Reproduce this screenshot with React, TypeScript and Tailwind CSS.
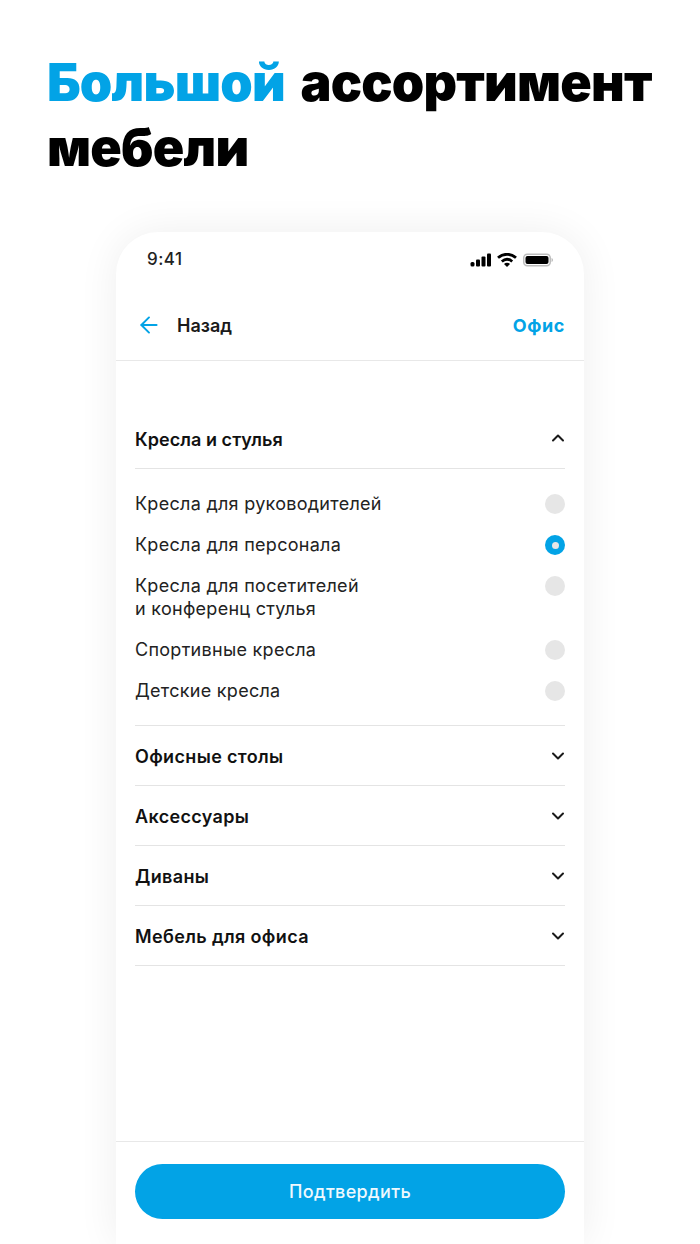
import { ArrowLeft, ChevronDown, ChevronUp } from 'lucide-react'

const font = { fontFamily: 'Inter, "Noto Sans", sans-serif' }

const options = [
  { label: ['Кресла для руководителей'], active: false },
  { label: ['Кресла для персонала'], active: true },
  { label: ['Кресла для посетителей', 'и конференц стулья'], active: false },
  { label: ['Спортивные кресла'], active: false },
  { label: ['Детские кресла'], active: false },
]

const sections = ['Офисные столы', 'Аксессуары', 'Диваны', 'Мебель для офиса']

const StatusIcons = () => (
  <div className="flex items-center">
    <svg width="22" height="14" viewBox="0 0 22 14" className="fill-black">
      <rect x="0.5" y="9" width="4" height="4.500" rx="1.500" />
      <rect x="6" y="6.500" width="4" height="7" rx="1" />
      <rect x="11.500" y="3.500" width="4" height="10" rx="1" />
      <rect x="17" y="0.5" width="4" height="13" rx="1" />
    </svg>
    <svg width="20" height="14" viewBox="0 0 20 14" fill="none" className="ml-[5px] stroke-black">
      <path d="M1 4.800C6.200 .1 13.800 .1 19 4.800" strokeWidth="2.800" />
      <path d="M4.800 8.500C8 5.700 12 5.700 15.200 8.500" strokeWidth="2.800" />
      <path d="M10 14 7 10.900c1.700-1.400 4.300-1.400 6 0z" fill="black" stroke="none" />
    </svg>
    <svg width="30" height="14" viewBox="0 0 30 14" className="ml-[6px]">
      <rect x="0.75" y="1.250" width="26.500" height="11.500" rx="3.500" fill="none" stroke="#bdbdbd" strokeWidth="1.500" />
      <rect x="2.500" y="3" width="23" height="8" rx="2" fill="black" />
      <path d="M28.500 5v4c.9-.3 1.500-1.100 1.500-2s-.6-1.700-1.500-2z" fill="#bdbdbd" />
    </svg>
  </div>
)

export default function App() {
  return (
    <div className="h-[1244px] overflow-hidden bg-white" style={font}>
      <h1 className="pl-[47px] pt-[50px] pb-[2px] text-[52px] leading-[65px] font-black tracking-[-0.8px] [word-spacing:6px] text-black whitespace-nowrap">
        <span className="text-[#02a3e6]">Большой</span> ассортимент
        <br />
        мебели
      </h1>

      <div className="mx-auto mt-[50px] flex h-[1012px] w-[468px] flex-col rounded-t-[42px] bg-white shadow-[0_0_40px_rgba(0,0,0,0.07)]">
        {/* Status bar */}
        <div className="flex h-[58px] items-center justify-between pb-[2px] pl-[31px] pr-[31px] text-black">
          <span className="text-[17px] font-medium tracking-[0.5px] text-[#222]">9:41</span>
          <StatusIcons />
        </div>

        {/* Nav */}
        <div className="flex h-[71px] items-center justify-between border-b border-[#e8e8e8] pl-[20px] pr-[19px]">
          <div className="flex items-center gap-[15px]">
            <ArrowLeft className="h-[26px] w-[26px] text-[#02a3e6]" strokeWidth={1.8} />
            <span className="text-[18px] font-semibold text-[#1a1a1a]">Назад</span>
          </div>
          <span className="text-[18px] font-bold tracking-[0.6px] text-[#02a3e6]">Офис</span>
        </div>

        <div className="px-[19px] pt-[47px]">
          <div className="flex h-[61px] items-center justify-between border-b border-[#e4e4e4]">
            <span className="pt-[2px] text-[18px] font-semibold tracking-[0.05px] text-[#111]">Кресла и стулья</span>
            <ChevronUp className="-mr-[3px] h-[20px] w-[20px] text-[#1a1a1a]" strokeWidth={2.4} />
          </div>

          <div className="flex flex-col gap-[18px] border-b border-[#e4e4e4] pb-[23px] pt-[23px]">
            {options.map((o) => (
              <div key={o.label[0]} className="flex items-start justify-between">
                <span className="text-[18px] leading-[23px] tracking-[0.28px] text-[#222]">
                  {o.label.map((l) => (
                    <span key={l} className="block">{l}</span>
                  ))}
                </span>
                {o.active ? (
                  <span className="mt-[2px] flex h-[20px] w-[20px] items-center justify-center rounded-full bg-[#02a3e6]">
                    <span className="h-[7px] w-[7px] rounded-full bg-[#e6e6e6]" />
                  </span>
                ) : (
                  <span className="mt-[2px] h-[20px] w-[20px] rounded-full bg-[#e6e6e6]" />
                )}
              </div>
            ))}
          </div>

          {sections.map((s) => (
            <div key={s} className="flex h-[60px] items-center justify-between border-b border-[#e4e4e4]">
              <span className="pt-[2px] text-[18px] font-semibold tracking-[0.35px] text-[#111]">{s}</span>
              <ChevronDown className="-mr-[3px] h-[20px] w-[20px] text-[#1a1a1a]" strokeWidth={2.4} />
            </div>
          ))}
        </div>

        {/* Footer */}
        <div className="mt-[175px] border-t border-[#e8e8e8] px-[19px] pt-[22px]">
          <button className="h-[55px] w-full rounded-full bg-[#02a3e6] text-[18px] font-medium tracking-[0.35px] text-[#eef9fe]">
            Подтвердить
          </button>
        </div>
      </div>
    </div>
  )
}
